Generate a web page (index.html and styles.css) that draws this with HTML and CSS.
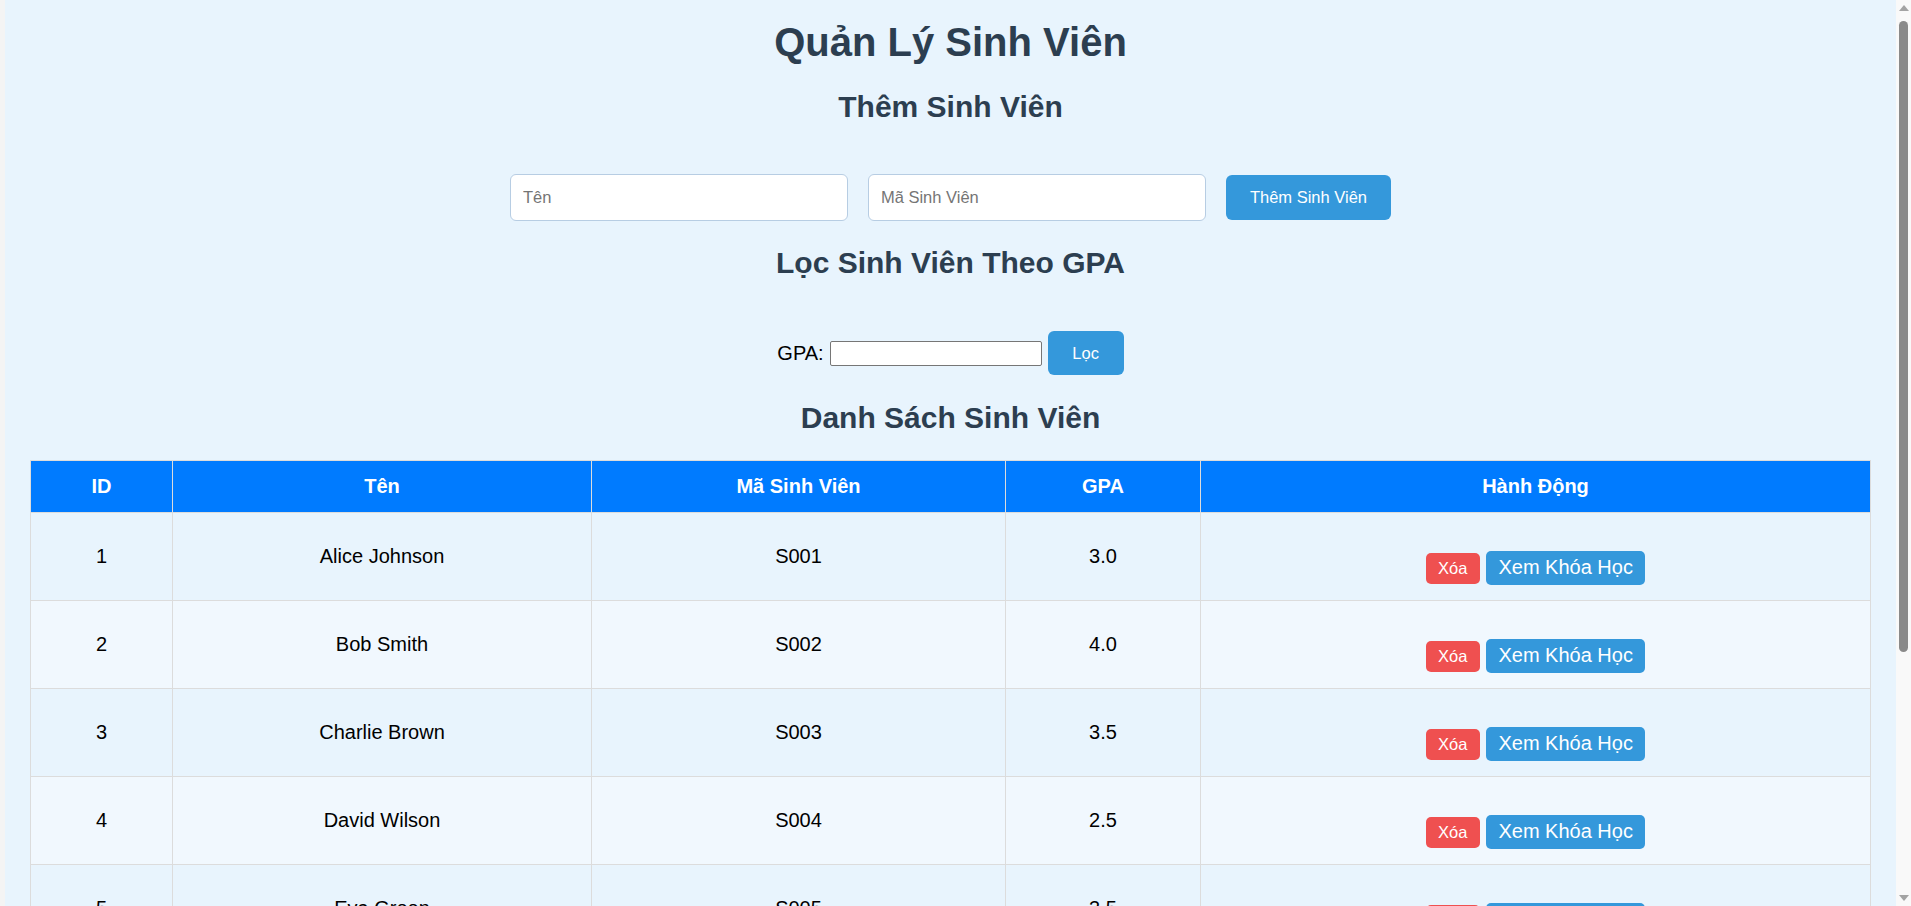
FILE: index.html
```html
<!DOCTYPE html>
<html lang="vi">
<head>
<meta charset="utf-8">
<title>Quản Lý Sinh Viên</title>
<link rel="stylesheet" href="styles.css">
</head>
<body>
<div class="app">
  <h1 class="title">Quản Lý Sinh Viên</h1>

  <h2 class="section">Thêm Sinh Viên</h2>
  <div class="add-row">
    <input class="field" type="text" placeholder="Tên">
    <input class="field" type="text" placeholder="Mã Sinh Viên">
    <button class="btn btn-primary">Thêm Sinh Viên</button>
  </div>

  <h2 class="section">Lọc Sinh Viên Theo GPA</h2>
  <div class="filter-row">
    <label class="gpa-label" for="gpa">GPA:</label>
    <input class="gpa-input" id="gpa" type="text">
    <button class="btn btn-primary btn-filter">Lọc</button>
  </div>

  <h2 class="section">Danh Sách Sinh Viên</h2>
  <table class="students">
    <colgroup>
      <col class="c-id"><col class="c-name"><col class="c-code"><col class="c-gpa"><col class="c-act">
    </colgroup>
    <thead>
      <tr><th>ID</th><th>Tên</th><th>Mã Sinh Viên</th><th>GPA</th><th>Hành Động</th></tr>
    </thead>
    <tbody>
      <tr><td>1</td><td>Alice Johnson</td><td>S001</td><td>3.0</td>
        <td class="actions"><div class="act-wrap"><button class="btn-del">Xóa</button><button class="btn-view">Xem Khóa Học</button></div></td></tr>
      <tr><td>2</td><td>Bob Smith</td><td>S002</td><td>4.0</td>
        <td class="actions"><div class="act-wrap"><button class="btn-del">Xóa</button><button class="btn-view">Xem Khóa Học</button></div></td></tr>
      <tr><td>3</td><td>Charlie Brown</td><td>S003</td><td>3.5</td>
        <td class="actions"><div class="act-wrap"><button class="btn-del">Xóa</button><button class="btn-view">Xem Khóa Học</button></div></td></tr>
      <tr><td>4</td><td>David Wilson</td><td>S004</td><td>2.5</td>
        <td class="actions"><div class="act-wrap"><button class="btn-del">Xóa</button><button class="btn-view">Xem Khóa Học</button></div></td></tr>
      <tr><td>5</td><td>Eva Green</td><td>S005</td><td>3.5</td>
        <td class="actions"><div class="act-wrap"><button class="btn-del">Xóa</button><button class="btn-view">Xem Khóa Học</button></div></td></tr>
      <tr><td>6</td><td>Frank Miller</td><td>S006</td><td>3.2</td>
        <td class="actions"><div class="act-wrap"><button class="btn-del">Xóa</button><button class="btn-view">Xem Khóa Học</button></div></td></tr>
    </tbody>
  </table>
</div>

<div class="scrollbar" aria-hidden="true">
  <span class="sb-arrow sb-up"></span>
  <span class="sb-thumb"></span>
  <span class="sb-arrow sb-down"></span>
</div>
</body>
</html>
```
FILE: styles.css
```css
html, body {
  margin: 0;
  padding: 0;
}

body {
  background: #f4f4f4;
  font-family: "Liberation Sans", Arial, sans-serif;
  color: #000;
}

.app {
  margin-left: 5px;
  margin-right: 15px;
  background: #e8f4fd;
  padding: 19px 25px 200px;
  min-height: 1000px;
}

.title {
  margin: 0;
  font-size: 40px;
  line-height: 46px;
  font-weight: bold;
  color: #2c3e50;
  text-align: center;
}

.section {
  margin: 25px 0;
  font-size: 30px;
  line-height: 34px;
  font-weight: bold;
  color: #2c3e50;
  text-align: center;
}

.add-row {
  margin-top: 50px;
  display: flex;
  justify-content: center;
  align-items: center;
  gap: 20px;
}

.field {
  box-sizing: border-box;
  width: 338px;
  height: 47px;
  padding: 0 12px;
  border: 1px solid #b7cde3;
  border-radius: 6px;
  background: #fff;
  font-family: "Liberation Sans", Arial, sans-serif;
  font-size: 16.5px;
  color: #333;
  outline: none;
}

.field::placeholder {
  color: #757575;
}

.btn {
  font-family: "Liberation Sans", Arial, sans-serif;
  border: none;
  cursor: pointer;
}

.btn-primary {
  box-sizing: border-box;
  height: 45px;
  padding: 0 24px;
  background: #3498db;
  color: #fff;
  font-size: 16.5px;
  border-radius: 6px;
}

.filter-row {
  margin-top: 50px;
  height: 46px;
  display: flex;
  justify-content: center;
  align-items: center;
}

.gpa-label {
  font-size: 20px;
  line-height: 23px;
}

.gpa-input {
  box-sizing: border-box;
  width: 212px;
  height: 25px;
  margin-left: 6px;
  padding: 1px 3px;
  border: 1px solid #767676;
  border-radius: 2px;
  background: #fff;
  font-size: 16px;
}

.btn-filter {
  height: 44px;
  width: 76px;
  padding: 0;
  margin-left: 6px;
}

.students {
  width: 100%;
  border-collapse: collapse;
  table-layout: fixed;
  font-size: 20px;
  line-height: 23px;
}

.c-id { width: 142px; }
.c-name { width: 419px; }
.c-code { width: 414px; }
.c-gpa { width: 195px; }
.c-act { width: auto; }

.students th {
  height: 52px;
  box-sizing: border-box;
  padding: 0 15px;
  background: #007bff;
  color: #fff;
  font-weight: bold;
  text-align: center;
  border: 1px solid #dcdcdc;
}

.students td {
  height: 88px;
  box-sizing: border-box;
  padding: 15px;
  text-align: center;
  vertical-align: middle;
  border: 1px solid #dcdcdc;
}

.students tbody tr:nth-child(odd) td {
  background: #e8f4fd;
}

.students tbody tr:nth-child(even) td {
  background: #f1f8fe;
}

.students td.actions {
  padding-top: 37px;
  padding-bottom: 15px;
}

.act-wrap {
  display: flex;
  justify-content: center;
  align-items: baseline;
  gap: 6px;
}

.btn-del {
  padding: 6px 12.5px;
  border: none;
  border-radius: 5px;
  background: #ef5050;
  color: #fff;
  font-family: "Liberation Sans", Arial, sans-serif;
  font-size: 16.5px;
  line-height: 19px;
}

.btn-view {
  padding: 5.5px 12.5px;
  border: none;
  border-radius: 5px;
  background: #3498db;
  color: #fff;
  font-family: "Liberation Sans", Arial, sans-serif;
  font-size: 20px;
  line-height: 23px;
}

/* browser scrollbar, drawn over the right edge */
.scrollbar {
  position: fixed;
  top: 0;
  right: 0;
  width: 15px;
  height: 100vh;
  background: #f9f9f9;
}

.sb-arrow {
  position: absolute;
  left: 3px;
  width: 0;
  height: 0;
  border-left: 5px solid transparent;
  border-right: 5px solid transparent;
}

.sb-up {
  top: 5px;
  border-bottom: 6px solid #a3a3a3;
}

.sb-down {
  bottom: 5px;
  border-top: 6px solid #a3a3a3;
}

.sb-thumb {
  position: absolute;
  top: 21px;
  left: 3px;
  width: 9px;
  height: 631px;
  border-radius: 5px;
  background: #8a8a8a;
}
```
